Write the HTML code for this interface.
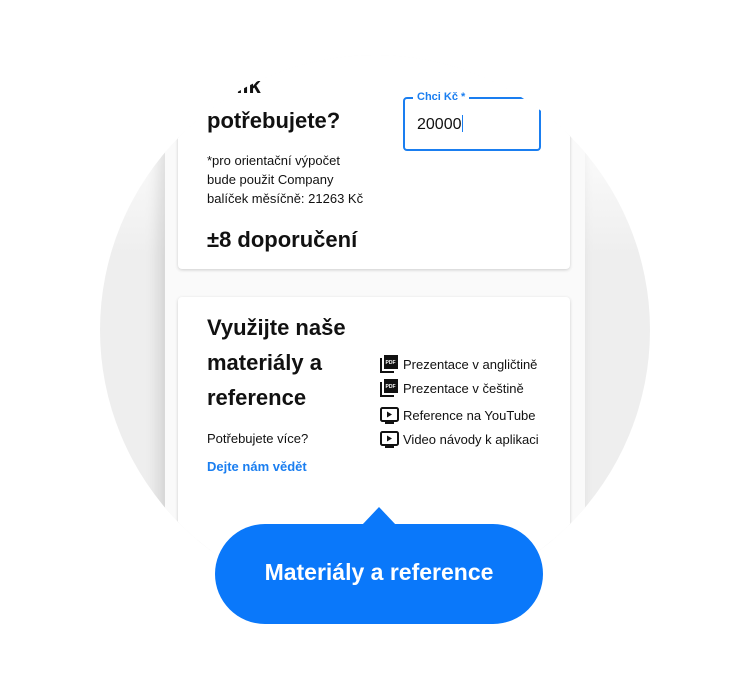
<!DOCTYPE html>
<html><head><style>
body{margin:0;width:750px;height:690px;background:#fff;font-family:"Liberation Sans",sans-serif;position:relative;overflow:hidden}
.circle{position:absolute;left:100px;top:55px;width:550px;height:550px;border-radius:50%;overflow:hidden;background:linear-gradient(#fff 0px,#fff 60px,#eeeeee 200px,#eeeeee 100%)}
.panel{position:absolute;left:65px;top:-20px;width:420px;height:505px;background:#fafafa;box-shadow:-6px 4px 14px rgba(0,0,0,.12)}
.card{position:absolute;left:13px;width:392px;background:#fff;border-radius:4px;box-shadow:0 1px 3px rgba(0,0,0,.18)}
.t{position:absolute;color:#111;white-space:nowrap}
.h{font-size:22px;font-weight:bold;line-height:35px}
.s{font-size:13px;line-height:19px}
.lnk{color:#1a7ef0;font-weight:bold;font-size:13px}
.ic{position:absolute;left:0}
.bubble{position:absolute;left:215px;top:524px;width:328px;height:100px;border-radius:50px;background:#0a78fa;color:#fff;font-size:23px;font-weight:bold;text-align:center;line-height:96px}
.arr{position:absolute;left:362px;top:507px;width:0;height:0;border-left:17px solid transparent;border-right:17px solid transparent;border-bottom:18px solid #0a78fa}
</style></head><body>
<div class="circle">
 <div class="panel">
  <div class="card" style="top:0;height:234px">
   <div class="t h" style="left:29px;top:33px">Kolik<br>potřebujete?</div>
   <div class="t s" style="left:29px;top:116px">*pro orientační výpočet<br>bude použit Company<br>balíček měsíčně: 21263 Kč</div>
   <div class="t" style="left:29px;top:192px;font-size:22px;font-weight:bold">±8 doporučení</div>
   <div style="position:absolute;left:225px;top:62px;width:134px;height:50px;border:2px solid #1a7ef0;border-radius:4px"></div>
   <div class="t" style="left:235px;top:56px;background:#fff;padding:0 4px;font-size:11px;color:#1a7ef0;font-weight:bold">Chci Kč *</div>
   <div class="t" style="left:239px;top:80px;font-size:16px">20000<span style="display:inline-block;width:1px;height:17px;background:#1a7ef0;vertical-align:-3px"></span></div>
  </div>
  <div class="card" style="top:262px;height:260px">
   <div class="t h" style="left:29px;top:13px;line-height:35px">Využijte naše<br>materiály a<br>reference</div>
   <div class="t s" style="left:29px;top:132px">Potřebujete více?</div>
   <div class="t lnk" style="left:29px;top:162px">Dejte nám vědět</div>
   <div style="position:absolute;left:202px;top:58px;font-size:13px;color:#111">
    <div style="position:relative;height:24px;padding-left:23px;line-height:19px">
     <svg class="ic" width="19" height="18" viewBox="0 0 19 18"><path d="M1 3v14h13" stroke="#111" stroke-width="2" fill="none"/><rect x="4" y="0" width="14" height="14" fill="#111"/><text x="5.5" y="9" font-size="5" fill="#fff" font-family="Liberation Sans" font-weight="bold">PDF</text></svg>Prezentace v angličtině</div>
    <div style="position:relative;height:27px;padding-left:23px;line-height:19px">
     <svg class="ic" width="19" height="18" viewBox="0 0 19 18"><path d="M1 3v14h13" stroke="#111" stroke-width="2" fill="none"/><rect x="4" y="0" width="14" height="14" fill="#111"/><text x="5.5" y="9" font-size="5" fill="#fff" font-family="Liberation Sans" font-weight="bold">PDF</text></svg>Prezentace v češtině</div>
    <div style="position:relative;height:24px;padding-left:23px;line-height:19px">
     <svg class="ic" width="19" height="18" viewBox="0 0 19 18"><rect x="1" y="2" width="17" height="13" rx="1.5" stroke="#111" stroke-width="2" fill="none"/><path d="M7 5.5v6l5-3z" fill="#111"/><path d="M5 17h9" stroke="#111" stroke-width="2"/></svg>Reference na YouTube</div>
    <div style="position:relative;height:24px;padding-left:23px;line-height:19px">
     <svg class="ic" width="19" height="18" viewBox="0 0 19 18"><rect x="1" y="2" width="17" height="13" rx="1.5" stroke="#111" stroke-width="2" fill="none"/><path d="M7 5.5v6l5-3z" fill="#111"/><path d="M5 17h9" stroke="#111" stroke-width="2"/></svg>Video návody k aplikaci</div>
   </div>
  </div>
 </div>
</div>
<div class="arr"></div>
<div class="bubble">Materiály a reference</div>
</body></html>
